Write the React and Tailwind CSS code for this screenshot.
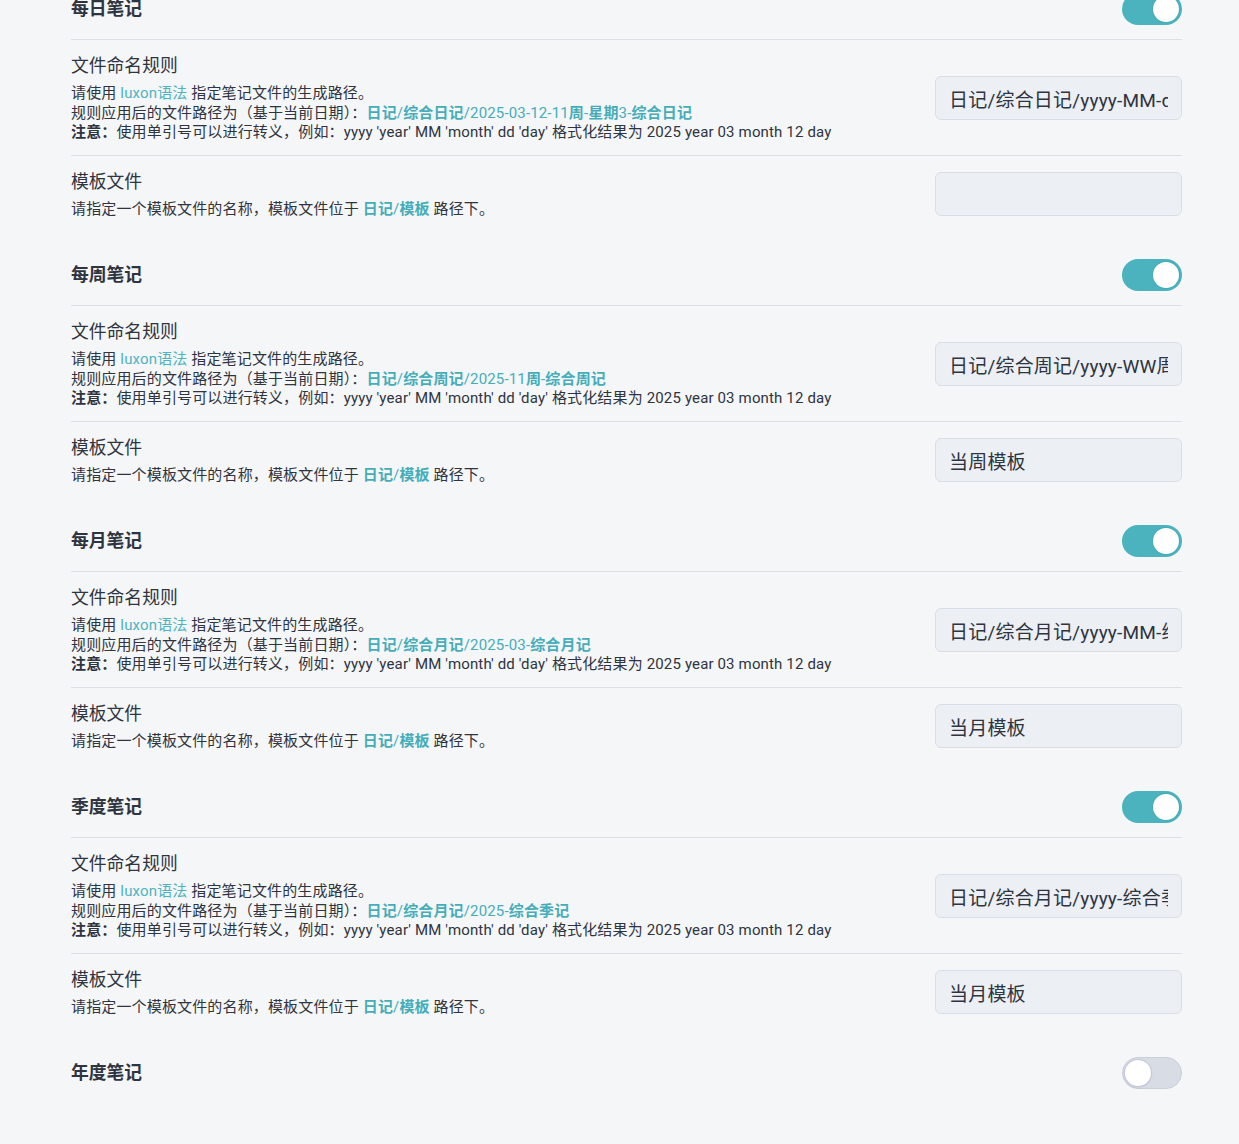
import { useState } from "react";

const Path = ({ text }) => (
  <span className="font-bold text-[#45adb9]">
    {text.split(/([\x00-\x7F]+)/).map((part, i) =>
      /^[\x00-\x7F]+$/.test(part) ? (
        <span key={i} className="font-normal">{part}</span>
      ) : (
        <span key={i}>{part}</span>
      )
    )}
  </span>
);

const Toggle = ({ initial }) => {
  const [on, setOn] = useState(initial);
  return (
    <button
      type="button"
      onClick={() => setOn(!on)}
      className={
        on
          ? "relative h-8 w-[60px] shrink-0 rounded-full bg-[#4ab3bd]"
          : "relative h-8 w-[60px] shrink-0 rounded-full border border-[#c9cfda] bg-[#d7dce5]"
      }
    >
      <span
        className={
          on
            ? "absolute right-[3px] top-[3px] h-[26px] w-[26px] rounded-full bg-white ring-1 ring-[#3fa3ad]/40"
            : "absolute left-[2px] top-[2px] h-[26px] w-[26px] rounded-full bg-white shadow-sm ring-1 ring-[#c3c9d5]"
        }
      />
    </button>
  );
};

const Heading = ({ title, on, last }) => (
  <div
    className={
      last
        ? "flex items-center justify-between pt-[28px] pb-[14px]"
        : "flex items-center justify-between border-b border-[#dcdfe8] pt-[28px] pb-[14px]"
    }
  >
    <div className="text-[17.8px] font-bold leading-6 text-[#2e3440]">{title}</div>
    <Toggle initial={on} />
  </div>
);

const Item = ({ name, children, value, last }) => (
  <div
    className={
      last
        ? "flex items-center justify-between gap-8 pt-[14px] pb-[12px]"
        : "flex items-center justify-between gap-8 border-b border-[#dcdfe8] pt-[14px] pb-[12px]"
    }
  >
    <div className="min-w-0">
      <div className="text-[17.8px] leading-6 text-[#2e3440]">{name}</div>
      <div className="mt-[6px] text-[15px] leading-[19.5px] tracking-[0.15px] text-[#2e3440]">{children}</div>
    </div>
    <input
      readOnly
      defaultValue={value}
      className="h-11 w-[247px] shrink-0 rounded-md border border-[#d8dde8] bg-[#eceff4] px-[13px] text-[19px] tracking-[0.2px] text-[#2e3440] outline-none"
    />
  </div>
);

const sections = [
  {
    title: "每日笔记",
    on: true,
    preview: "日记/综合日记/2025-03-12-11周-星期3-综合日记",
    rule: "日记/综合日记/yyyy-MM-dd-WW周-星期E-综合日记",
    tpl: "",
  },
  {
    title: "每周笔记",
    on: true,
    preview: "日记/综合周记/2025-11周-综合周记",
    rule: "日记/综合周记/yyyy-WW周-综合周记",
    tpl: "当周模板",
  },
  {
    title: "每月笔记",
    on: true,
    preview: "日记/综合月记/2025-03-综合月记",
    rule: "日记/综合月记/yyyy-MM-综合月记",
    tpl: "当月模板",
  },
  {
    title: "季度笔记",
    on: true,
    preview: "日记/综合月记/2025-综合季记",
    rule: "日记/综合月记/yyyy-综合季记",
    tpl: "当月模板",
  },
];

const Section = ({ s }) => (
  <div>
    <Heading title={s.title} on={s.on} />
    <Item name="文件命名规则" value={s.rule}>
      <div>
        请使用 <span className="text-[#4fb3bf]">luxon语法</span> 指定笔记文件的生成路径。
      </div>
      <div>
        规则应用后的文件路径为（基于当前日期）：<Path text={s.preview} />
      </div>
      <div>
        <span className="font-bold">注意：</span>使用单引号可以进行转义，例如：yyyy 'year' MM 'month' dd 'day' 格式化结果为 2025 year 03 month 12 day
      </div>
    </Item>
    <Item name="模板文件" value={s.tpl} last>
      请指定一个模板文件的名称，模板文件位于 <Path text="日记/模板" /> 路径下。
    </Item>
  </div>
);

export default function App() {
  return (
    <div className="min-h-screen overflow-hidden bg-[#f5f6f8] font-['Roboto','Noto_Sans_CJK_SC',sans-serif]">
      <div className="-mt-[35px] pl-[71px] pr-[57px] pb-10">
        {sections.map((s) => (
          <Section key={s.title} s={s} />
        ))}
        <Heading title="年度笔记" on={false} last />
      </div>
    </div>
  );
}
